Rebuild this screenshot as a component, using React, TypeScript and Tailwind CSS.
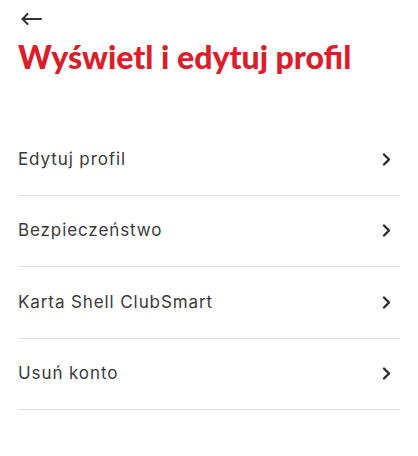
import React from "react";

const items = ["Edytuj profil", "Bezpieczeństwo", "Karta Shell ClubSmart", "Usuń konto"];

export default function App() {
  return (
    <div className="w-[418px] h-[456px] bg-white overflow-hidden px-[18px]">
      <div className="h-[36px] flex items-center pl-[3px] pt-[1px]">
        <svg width="21" height="12" viewBox="0 0 21 12" fill="none" stroke="#333333" strokeWidth="2" strokeLinecap="round" strokeLinejoin="round">
          <path d="M20 6H1.5" />
          <path d="M6.5 1L1.5 6l5 5" />
        </svg>
      </div>
      <h1 className="mt-[2px] text-[#d9202a] font-black text-[32px] leading-[38px] font-['Lato','Noto_Sans',sans-serif]">
        Wyświetl i edytuj profil
      </h1>
      <div className="mt-[48px]">
        {items.map((t) => (
          <div key={t} className="h-[71.5px] border-b-[1.5px] border-[#e2e2e2] flex items-center justify-between">
            <span className="text-[17px] tracking-[0.9px] text-[#3a3a3a] font-['Inter','Roboto',sans-serif]">{t}</span>
            <svg className="mr-[9px]" width="9" height="13" viewBox="0 0 9 13" fill="none" stroke="#2a2a2a" strokeWidth="2.3" strokeLinecap="round" strokeLinejoin="round">
              <path d="M2 1.5l5 5-5 5" />
            </svg>
          </div>
        ))}
      </div>
    </div>
  );
}
